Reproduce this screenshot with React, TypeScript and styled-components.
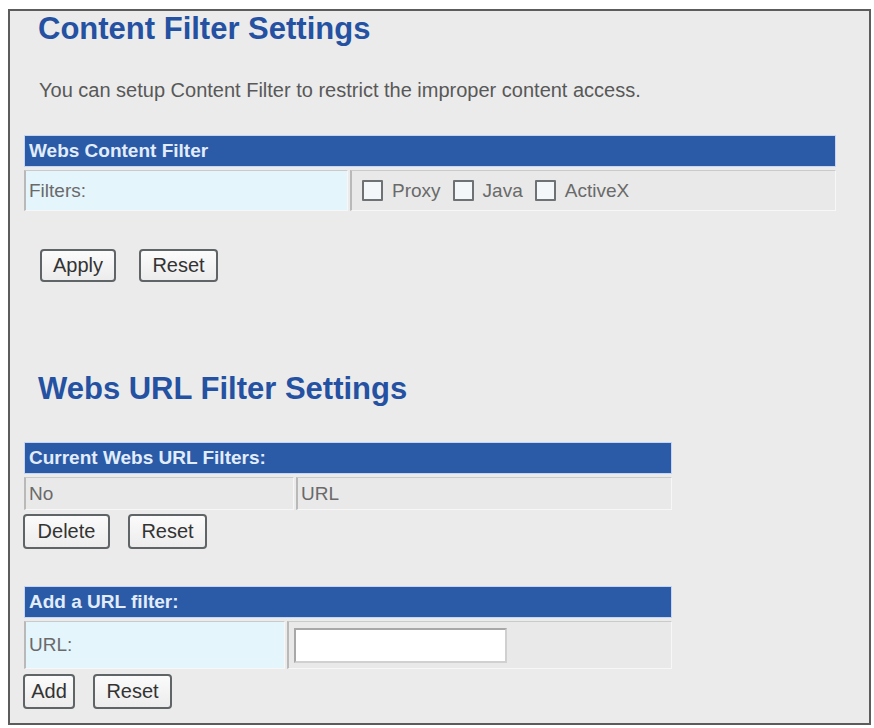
import React from "react";
import styled, { createGlobalStyle } from "styled-components";

const GlobalStyle = createGlobalStyle`
  html, body {
    margin: 0;
    padding: 0;
    background: #ffffff;
  }
  body {
    font-family: "Liberation Sans", Arial, sans-serif;
  }
`;

const Page = styled.div`
  padding: 9px 0 0 8px;
`;

const Frame = styled.div`
  box-sizing: border-box;
  width: 863px;
  height: 716px;
  border: 2px solid #5c5c5c;
  background: #ebebeb;
  display: flex;
  flex-direction: column;
  align-items: flex-start;
`;

const Title = styled.h1<{ $top: number }>`
  margin: ${(p) => p.$top}px 0 0 28px;
  font-size: 31px;
  line-height: 36px;
  font-weight: bold;
  color: #2451a2;
`;

const Intro = styled.p`
  margin: 31px 0 0 29px;
  font-size: 20px;
  line-height: 24px;
  color: #585858;
`;

const Panel = styled.div<{ $width: number; $top: number }>`
  margin: ${(p) => p.$top}px 0 0 14px;
  width: ${(p) => p.$width}px;
  display: flex;
  flex-direction: column;
  gap: 3px;
`;

const PanelHead = styled.div`
  box-sizing: border-box;
  height: 32px;
  border: 1px solid #c6d6f2;
  background: #2b5aa6;
  color: #e2edfb;
  font-weight: bold;
  font-size: 19px;
  line-height: 30px;
  padding: 0 4px;
  white-space: nowrap;
`;

const PanelRow = styled.div<{ $height: number; $split: number }>`
  display: grid;
  grid-template-columns: ${(p) => p.$split}px 1fr;
  column-gap: 2px;
  height: ${(p) => p.$height}px;
`;

const Cell = styled.div<{ $tone: "label" | "plain" }>`
  box-sizing: border-box;
  display: flex;
  align-items: center;
  gap: 12px;
  padding: 0 3px;
  border-style: solid;
  border-width: 1px 1px 1px 2px;
  border-color: #cacaca #f7f7f7 #f7f7f7 #b9b9b9;
  background: ${(p) => (p.$tone === "label" ? "#e5f5fc" : "#e9e9e9")};
  font-size: 19px;
  color: #6a6a6a;
  white-space: nowrap;
`;

const OptionCell = styled(Cell)`
  padding-left: 10px;
`;

const Option = styled.label`
  display: inline-flex;
  align-items: center;
  gap: 9px;
`;

const Check = styled.input.attrs({ type: "checkbox" })`
  appearance: none;
  box-sizing: border-box;
  width: 21px;
  height: 21px;
  margin: 0;
  border: 2px solid #6e7275;
  border-radius: 1px;
  background: #f3f7fa;
`;

const TextField = styled.input.attrs({ type: "text" })`
  box-sizing: border-box;
  width: 213px;
  height: 35px;
  margin: 0 0 0 2px;
  border: 2px solid #a8a8a8;
  border-right-color: #d0d0d0;
  border-bottom-color: #d0d0d0;
  background: #ffffff;
  outline: none;
`;

const Actions = styled.div<{ $top: number; $left: number; $gap: number }>`
  margin: ${(p) => p.$top}px 0 0 ${(p) => p.$left}px;
  display: flex;
  gap: ${(p) => p.$gap}px;
`;

const Button = styled.button<{ $width: number; $height: number }>`
  box-sizing: border-box;
  width: ${(p) => p.$width}px;
  height: ${(p) => p.$height}px;
  padding: 0;
  border: 2px solid #5f6466;
  border-radius: 4px;
  background: linear-gradient(#fbfbfb, #ececec);
  font-family: "Liberation Sans", Arial, sans-serif;
  font-size: 20px;
  color: #333333;
`;

export default function App() {
  return (
    <>
      <GlobalStyle />
      <Page>
        <Frame>
          <Title $top={0}>Content Filter Settings</Title>
          <Intro>
            You can setup Content Filter to restrict the improper content access.
          </Intro>

          <Panel $width={812} $top={33}>
            <PanelHead>Webs Content Filter</PanelHead>
            <PanelRow $height={41} $split={324}>
              <Cell $tone="label">Filters:</Cell>
              <OptionCell $tone="plain">
                <Option>
                  <Check />
                  Proxy
                </Option>
                <Option>
                  <Check />
                  Java
                </Option>
                <Option>
                  <Check />
                  ActiveX
                </Option>
              </OptionCell>
            </PanelRow>
          </Panel>

          <Actions $top={38} $left={30} $gap={23}>
            <Button $width={76} $height={33}>Apply</Button>
            <Button $width={79} $height={33}>Reset</Button>
          </Actions>

          <Title $top={89}>Webs URL Filter Settings</Title>

          <Panel $width={648} $top={35}>
            <PanelHead>Current Webs URL Filters:</PanelHead>
            <PanelRow $height={33} $split={270}>
              <Cell $tone="plain">No</Cell>
              <Cell $tone="plain">URL</Cell>
            </PanelRow>
          </Panel>

          <Actions $top={4} $left={13} $gap={18}>
            <Button $width={87} $height={35}>Delete</Button>
            <Button $width={79} $height={35}>Reset</Button>
          </Actions>

          <Panel $width={648} $top={37}>
            <PanelHead>Add a URL filter:</PanelHead>
            <PanelRow $height={48} $split={261}>
              <Cell $tone="label">URL:</Cell>
              <Cell $tone="plain">
                <TextField />
              </Cell>
            </PanelRow>
          </Panel>

          <Actions $top={5} $left={13} $gap={18}>
            <Button $width={52} $height={35}>Add</Button>
            <Button $width={79} $height={35}>Reset</Button>
          </Actions>
        </Frame>
      </Page>
    </>
  );
}
